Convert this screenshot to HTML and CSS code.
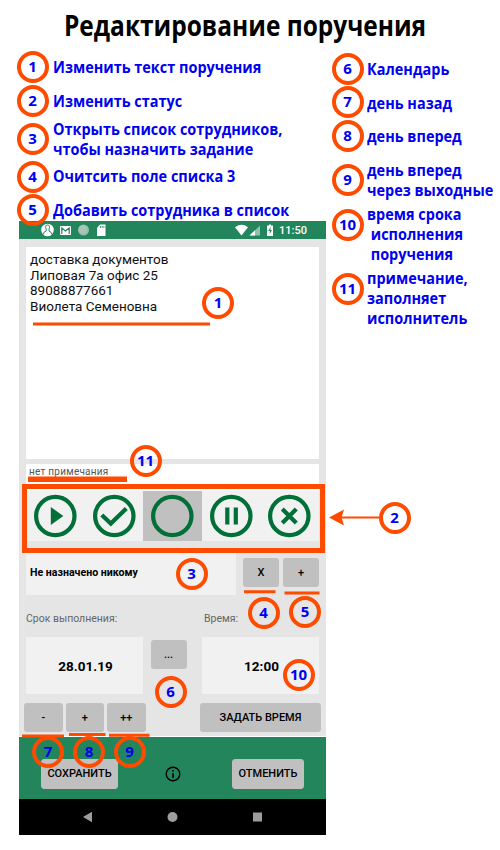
FILE: index.html
```
<!DOCTYPE html>
<html lang="ru">
<head>
<meta charset="utf-8">
<title>Редактирование поручения</title>
<link rel="stylesheet" href="styles.css">
</head>
<body>
<main class="page">
  <h1 class="title"><span>Редактирование поручения</span></h1>

  <ol class="legend legend-left">
    <li><b class="num">1</b><p>Изменить текст поручения</p></li>
    <li><b class="num">2</b><p>Изменить статус</p></li>
    <li class="tall"><b class="num">3</b><p>Открыть список сотрудников,<br>чтобы назначить задание</p></li>
    <li class="short"><b class="num">4</b><p>Очитсить поле списка 3</p></li>
    <li class="short"><b class="num">5</b><p>Добавить сотрудника в список</p></li>
  </ol>

  <ol class="legend legend-right">
    <li><b class="num">6</b><p>Календарь</p></li>
    <li><b class="num">7</b><p>день назад</p></li>
    <li><b class="num">8</b><p>день вперед</p></li>
    <li class="two"><b class="num">9</b><p>день вперед<br>через выходные</p></li>
    <li class="three"><b class="num">10</b><p>время срока<br><span class="indent">исполнения</span><br><span class="indent">поручения</span></p></li>
    <li class="three last"><b class="num">11</b><p>примечание,<br>заполняет<br>исполнитель</p></li>
  </ol>

  <section class="phone">
    <header class="statusbar">
      <svg class="left-icons" width="70" height="18" viewBox="0 0 70 18">
        <circle cx="7.500" cy="9" r="6.300" fill="#fff"/>
        <path d="M3.300 13.500Q3.500 10.500 6.200 10V8.500Q4.500 4 7.500 4T9 8.500V10Q11.500 10.500 11.800 13.500" fill="none" stroke="#22855b" stroke-width="1"/>
        <rect x="20" y="5" width="11" height="9" rx="1" fill="#fff"/>
        <path d="M21.800 13V7L25.500 10L29.200 7V13" fill="none" stroke="#22855b" stroke-width="1.200"/>
        <circle cx="43.500" cy="9" r="5.500" fill="#8fc2ad"/>
        <circle cx="43" cy="8.500" r="4" fill="#a9c5ba"/>
        <path d="M57 7L60 3.500H65.500V15H57Z" fill="#fff"/>
        <path d="M60.500 5V7M62.200 5V7M63.900 5V7" stroke="#22855b" stroke-width=".8"/>
      </svg>
      <svg class="right-icons" width="40" height="18" viewBox="0 0 40 18">
        <path d="M0 6.200Q6.500 1.500 13 6.200L6.500 14.500Z" fill="#fff"/>
        <path d="M25 4.500V14.500H14.500Z" fill="#8fc2ad"/>
        <path d="M20 9.300V14.500H14.500Z" fill="#fff"/>
        <path d="M32 4.500H34V3.500H36V4.500H38V15H32Z" fill="#fff"/>
        <path d="M35.700 5.500L33.300 10H35L34.500 13.500L37 9H35.300Z" fill="#22855b"/>
      </svg>
      <span class="clock">11:50</span>
    </header>

    <div class="task">доставка документов<br>Липовая 7а офис 25<br>89088877661<br>Виолета Семеновна</div>
    <div class="note">нет примечания</div>

    <div class="states">
      <svg viewBox="0 0 58 50"><circle cx="29" cy="25" r="19.200"/><path class="fill" d="M24.500 16V34L37 25Z"/></svg>
      <svg viewBox="0 0 58 50"><circle cx="29" cy="25" r="19.200"/><path d="M16.500 24L25.500 32.500L41 17.500"/></svg>
      <svg class="active" viewBox="0 0 58 50"><circle cx="29" cy="25" r="19.200"/></svg>
      <svg viewBox="0 0 58 50"><circle cx="29" cy="25" r="19.200"/><path d="M25 16.500V33.500M33.500 16.500V33.500"/></svg>
      <svg viewBox="0 0 58 50"><circle cx="29" cy="25" r="19.200"/><path d="M22 18L36 32M36 18L22 32"/></svg>
    </div>

    <div class="assign">
      <div class="assignee">Не назначено никому</div>
      <button class="btn small">X</button>
      <button class="btn small">+</button>
    </div>

    <div class="schedule">
      <div class="label">Срок выполнения:</div><div></div><div class="label label-time">Время:</div>
      <div class="value">28.01.19</div>
      <button class="btn more">...</button>
      <div class="value">12:00</div>
    </div>

    <div class="steps">
      <button class="btn">-</button>
      <button class="btn">+</button>
      <button class="btn">++</button>
      <button class="btn set-time">ЗАДАТЬ ВРЕМЯ</button>
    </div>

    <footer class="actions">
      <button class="btn save">СОХРАНИТЬ</button>
      <svg width="16" height="16" viewBox="0 0 16 16"><circle cx="8" cy="8" r="6.800" fill="none" stroke="#000" stroke-width="1.400"/><path d="M8 7V12M8 4V5.600" stroke="#000" stroke-width="1.500"/></svg>
      <button class="btn cancel">ОТМЕНИТЬ</button>
    </footer>

    <nav class="navbar">
      <svg width="307" height="36" viewBox="0 0 307 36" fill="#9d9d9d"><path d="M64 18L73 12.800V23.200Z"/><circle cx="153.500" cy="18" r="5"/><rect x="234" y="13.500" width="9" height="9"/></svg>
    </nav>
  </section>

  <div class="frame"></div>
  <svg class="marks" width="500" height="850" viewBox="0 0 500 850">
    <g stroke="#ff4b00" stroke-width="3">
      <path d="M33 324H210M244 591.700H275.500M284.500 593H319.500M22 736H64M69 734.500H105.500M109 735.200H149.500"/>
      <path d="M28 479.200H127" stroke-width="5.500"/>
      <path d="M340 517.500H379" stroke-width="2"/>
    </g>
    <path d="M329 517.500L344 509.500L341.500 517.500L344 525.500Z" fill="#ff4b00"/>
  </svg>
  <b class="num pin pin-1">1</b>
  <b class="num pin pin-2">2</b>
  <b class="num pin pin-3">3</b>
  <b class="num pin pin-4">4</b>
  <b class="num pin pin-5">5</b>
  <b class="num pin pin-6">6</b>
  <b class="num pin pin-7">7</b>
  <b class="num pin pin-8">8</b>
  <b class="num pin pin-9">9</b>
  <b class="num pin pin-10">10</b>
  <b class="num pin pin-11">11</b>
</main>
</body>
</html>
```
FILE: styles.css
```
* { box-sizing: border-box; }
body { margin: 0; background: #fff; font-family: Roboto, "Liberation Sans", sans-serif; }
.page {
  position: relative;
  width: 500px;
  height: 850px;
  display: grid;
  grid-template-columns: 326px 174px;
  grid-template-rows: 50px 171px 614px;
}
.title {
  grid-column: 1 / 3;
  margin: 0;
  padding-left: 64px;
  font: 700 28.500px/50px "Open Sans", "Noto Sans", sans-serif;
  white-space: nowrap;
}
.title span { display: inline-block; transform: scaleX(.859); transform-origin: left; }
.legend {
  list-style: none;
  margin: 0;
  padding: 0;
  color: #0000f0;
  font: 700 15.500px/20px "Open Sans", "Noto Sans", sans-serif;
  white-space: nowrap;
  z-index: 2;
}
.legend p { margin: 0; transform: scaleX(.933); transform-origin: left; }
.legend-right p { padding-top: 1px; }
.legend li { display: flex; align-items: center; height: 34px; gap: 4px; }
.legend-left { padding-left: 16.500px; }
.legend-left p { margin-top: -1px; }
.legend-left .tall { height: 42px; }
.legend-left .short { height: 33.500px; }
.legend-right { grid-row: 2 / 4; grid-column: 2; padding: 2px 0 0 5.500px; }
.legend-right li { height: 33.600px; gap: 3.500px; }
.legend-right .two { height: 54px; }
.legend-right .three { height: 64px; align-items: flex-start; }
.legend-right .three p { margin-top: -4px; }
.legend-right .three .num { margin-top: 2px; }
.indent { padding-left: 4px; }

.num {
  flex: none;
  width: 32px;
  height: 32px;
  border: 4px solid #ff4b00;
  border-radius: 50%;
  color: #0000f0;
  font: 700 15px/23px "Open Sans", "Noto Sans", sans-serif;
  text-align: center;
}

.phone { grid-row: 3; grid-column: 1; margin-left: 19px; background: #e5e5e5; }
.statusbar { height: 18px; background: #22855b; display: flex; align-items: center; color: #fff; }
.left-icons { margin-left: 21px; }
.right-icons { margin-left: 125px; }
.clock { margin-left: 4px; padding-top: 1px; font-size: 11px; font-weight: 500; line-height: 18px; }
.task {
  height: 212px;
  margin: 8px 7px 0;
  padding: 5px 4px;
  background: #fff;
  font-size: 13.500px;
  line-height: 15.600px;
  color: #111;
}
.note { height: 27px; margin: 4.500px 7px 0; padding-left: 3px; background: #fff; font-size: 10px; line-height: 16px; letter-spacing: .25px; color: #555; }
.states { display: grid; grid-template-columns: repeat(5, 1fr); height: 50px; margin: 0 7px; background: #f1f1f1; }
.states svg { width: 100%; height: 50px; fill: none; stroke: #007038; stroke-width: 4.200; }
.states .fill { fill: #007038; stroke: none; }
.states .active { background: #c0c0c0; }
.assign { display: flex; align-items: flex-start; margin: 9.500px 7px 0; height: 45px; }
.assignee { width: 210px; height: 45px; background: #f1f1f1; padding-left: 4px; margin-right: 7px; font-size: 10.600px; font-weight: 700; line-height: 46px; }
.btn {
  height: 29px;
  padding: 0;
  border: 0;
  border-radius: 3px;
  background: #c0c0c0;
  color: #000;
  font: 500 11px/29px Roboto, "Liberation Sans", sans-serif;
  text-align: center;
}
.btn.small { width: 36px; margin: 7.500px 4px 0 0; flex: none; }
.btn.small:last-child { margin-right: 0; }
.schedule { display: grid; grid-template-columns: 117px 59px 117px; grid-template-rows: 42px 57px; margin: 0 7px; justify-items: center; }
.label { justify-self: start; font-size: 10.500px; line-height: 48px; color: #666; }
.label-time { padding-left: 2px; }
.value { width: 117px; background: #f1f1f1; padding-left: 2px; text-align: center; font-size: 13.500px; font-weight: 700; line-height: 58px; }
.more { width: 36px; margin: 3px 8px 0 0; }
.steps { display: flex; gap: 3px; height: 43px; padding: 9px 5px 0; border-bottom: 1px solid #fff; }
.steps .btn { width: 38.500px; }
.steps .set-time { width: 121px; margin-left: auto; }
.actions { display: flex; align-items: center; height: 62px; padding: 11px 22px 0; background: #22855b; }
.actions .btn { border: 1px solid #c9bcbd; height: 30px; line-height: 28px; }
.save { width: 77px; margin-right: 46.500px; }
.cancel { width: 72px; margin-left: auto; }
.navbar { height: 36px; background: #000; }
.navbar svg { display: block; }

.frame { position: absolute; left: 22px; top: 484px; width: 303px; height: 69px; border: 5.500px solid #ff4b00; }
.marks { position: absolute; left: 0; top: 0; }
.pin { position: absolute; z-index: 3; }
.pin-1 { left: 202px; top: 287px; }
.pin-2 { left: 378.500px; top: 501.500px; }
.pin-3 { left: 175.500px; top: 558px; }
.pin-4 { left: 247.500px; top: 597px; }
.pin-5 { left: 289px; top: 596px; }
.pin-6 { left: 154.500px; top: 675.500px; }
.pin-7 { left: 32px; top: 736px; }
.pin-8 { left: 73px; top: 736px; }
.pin-9 { left: 113.500px; top: 736px; }
.pin-10 { left: 282.500px; top: 659px; }
.pin-11 { left: 129.500px; top: 444.500px; }
```
